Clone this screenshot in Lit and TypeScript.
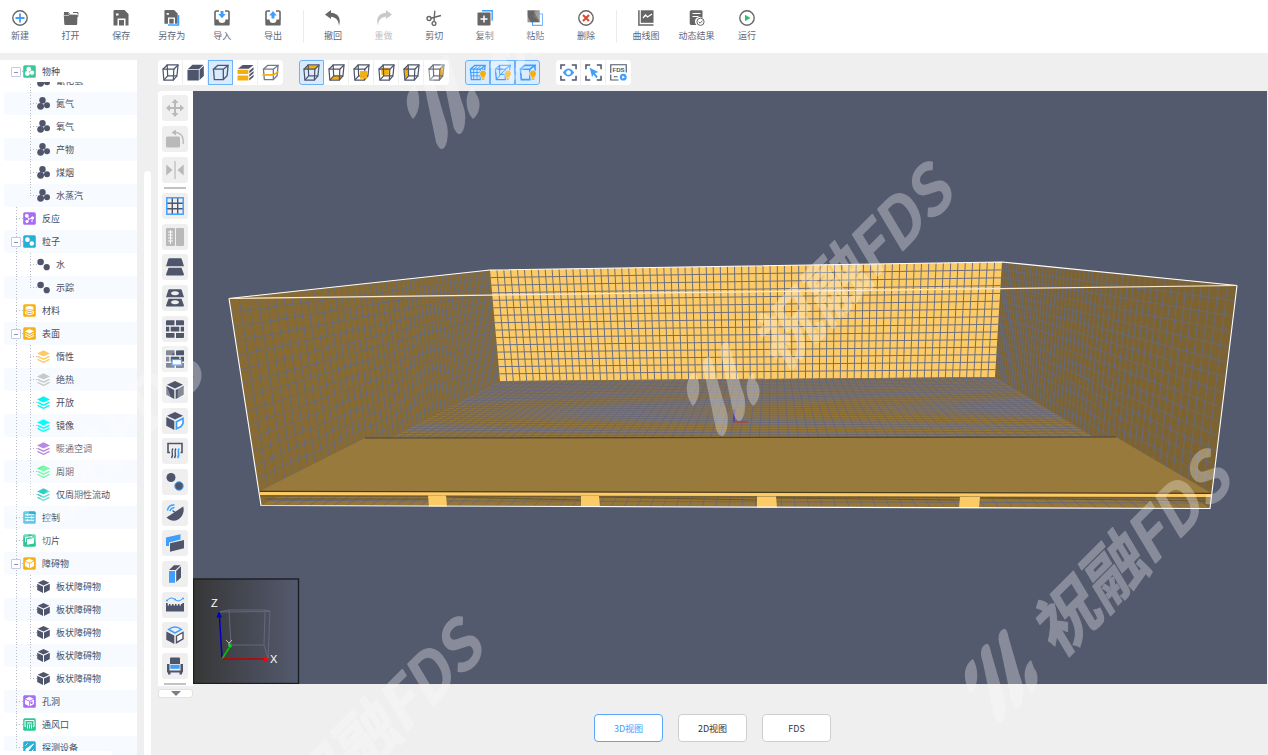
import { LitElement, html, svg, css, nothing } from "lit";
import { customElement, property, state } from "lit/decorators.js";
import { classMap } from "lit/directives/class-map.js";

const D = "#4f566b";
const B = "#409eff";
const Y = "#f5ae0c";
const G = "#666666";
const L = "#b9b9b9";

/* ---------- top bar icons (16 x 16) ---------- */
const floppy = svg`<path fill=${G} d="M1.500 0H11.500L15.500 4V15.500H12.500V8.500H4.500V15.500H.5V1A1 1 0 0 1 1.500 0ZM3 3.500V5.500H5.500V3.500Z" fill-rule="evenodd"/><rect x="6" y="10" width="5" height="5.500" fill=${G}/>`;
const topIcons: Record<string, unknown> = {
  new: svg`<circle cx="8" cy="8" r="7.200" fill="none" stroke=${G} stroke-width="1.400"/><path d="M8 3.500v9M3.500 8h9" stroke=${B} stroke-width="1.800"/>`,
  open: svg`<path fill=${G} d="M.8 5.500 1 3h4l1 1.500h8.500L14.200 14a1 1 0 0 1-1 1H2.300a1 1 0 0 1-1-1Z"/><path fill="none" stroke=${G} d="M1 2.500h4.500L6.500 4M10 2.500h5L14.700 7"/><path stroke="#fff" stroke-width=".6" d="M1 5.500h5l1-1h8"/>`,
  save: floppy,
  saveas: svg`<g transform="scale(.88)">${floppy}</g><path d="M4 15h10.500V5" fill="none" stroke=${B} stroke-width="1.500"/>`,
  import: svg`<path d="M5 1H2.200A1.200 1.200 0 0 0 1 2.200V10M11 1h2.800A1.200 1.200 0 0 1 15 2.200V10" fill="none" stroke=${G} stroke-width="1.600"/><path fill=${G} d="M.3 9.500H4.500a3.500 3.500 0 0 0 7 0h4.200V14.500a1 1 0 0 1-1 1H1.300a1 1 0 0 1-1-1Z"/><path fill=${B} d="M6.500 1h3v3h2.300L8 8.200 4.200 4h2.300Z"/>`,
  export: svg`<path d="M5 1H2.200A1.200 1.200 0 0 0 1 2.200V10M11 1h2.800A1.200 1.200 0 0 1 15 2.200V10" fill="none" stroke=${G} stroke-width="1.600"/><path fill=${G} d="M.3 9.500H4.500a3.500 3.500 0 0 0 7 0h4.200V14.500a1 1 0 0 1-1 1H1.300a1 1 0 0 1-1-1Z"/><path fill=${B} d="M6.500 8.500h3v-3h2.300L8 1 4.200 5.500h2.300Z"/>`,
  undo: svg`<path fill=${G} d="M0 4.500 6 0v2.800C12.500 3 16.500 8 14 15.500 13.500 10 10.500 7 6 6.800V9Z"/>`,
  redo: svg`<path fill="#c9c9c9" d="M16 4.500 10 0v2.800C3.500 3 -.5 8 2 15.500 2.500 10 5.500 7 10 6.800V9Z"/>`,
  cut: svg`<g fill="none" stroke=${G} stroke-width="1.400"><circle cx="3" cy="8.500" r="2"/><circle cx="8" cy="13.500" r="1.900"/><path d="M4.800 8.200 15 5.500M8 11.500 8.800.8"/></g>`,
  copy: svg`<path d="M5 .8h10.200V11" fill="none" stroke=${B} stroke-width="1.400"/><rect x=".5" y="2.500" width="13" height="13" rx=".8" fill=${G}/><path d="M7 5.500v7M3.500 9h7" stroke="#fff" stroke-width="1.500"/>`,
  paste: svg`<rect x="5.500" y="4" width="10" height="11.300" fill="none" stroke=${B}/><rect x=".5" y=".3" width="12" height="12" fill=${G}/><path d="M12.500.3 6 6l6.500 6.300Z" fill="#777"/>`,
  delete: svg`<circle cx="8" cy="8" r="7.200" fill="none" stroke=${G} stroke-width="1.400"/><path d="m5 5 6 6M11 5l-6 6" stroke="#d9482b" stroke-width="2"/>`,
  curve: svg`<rect x="2.800" y=".3" width="12.700" height="12.500" fill=${G}/><path d="M.9.300V15h14.600" fill="none" stroke=${G} stroke-width="1.500"/><path d="m5 8 2.500-3 2 2L14 4" fill="none" stroke="#fff" stroke-width="1.300"/>`,
  result: svg`<path fill=${G} d="M2.500.3h10a1 1 0 0 1 1 1V8A4.500 4.500 0 0 0 7.500 15H2a1.500 1.500 0 0 1-1.300-1.500V2A1.700 1.700 0 0 1 2.500.300Z"/><path d="M3.500 3.500h8M3.500 6.500h6" stroke="#fff"/><circle cx="11.500" cy="11.800" r="3.600" fill="#fff" stroke=${G}/><path d="m9.700 11.800 1.400 1.400 2.400-2.600" fill="none" stroke=${G}/>`,
  run: svg`<circle cx="8" cy="8" r="7.200" fill="none" stroke=${G} stroke-width="1.400"/><path d="M6 4.800 11.500 8 6 11.200Z" fill="#2cc36b"/>`,
};

/* ---------- horizontal view toolbar icons (18 x 18) ---------- */
const wire = (c: string) => svg`<g fill="none" stroke=${c} stroke-width="1.300"><path d="M1 5.500H12.500L12 17H2ZM5.500 1H17L15.800 12.500H6Z"/><path d="M1 5.500 5.500 1M12.500 5.500 17 1M12 17l3.800-4.500M2 17l4-4.500"/></g>`;
const box = (c: string) => svg`<g fill="none" stroke=${c} stroke-width="1.400"><path d="M1.500 5.500H12V16.500H2.500ZM1.500 5.500 6 1.500H17L12 5.500M17 1.500L16 12.500L12 16.500"/></g>`;
const bulb = svg`<path fill=${Y} stroke="#d9ebff" stroke-width="1.600" paint-order="stroke" d="M14.800 7a3.200 3.200 0 0 1 1.800 5.800V14.300H13V12.800A3.200 3.200 0 0 1 14.800 7ZM13.300 15h3v1.800H13.300Z"/>`;
const corners = svg`<path d="M1 5.500V1H5.500M12.500 1H17V5.500M17 12.500V17H12.500M5.500 17H1V12.500" fill="none" stroke=${D} stroke-width="1.600"/>`;
const viewIcons: Record<string, unknown> = {
  wire: wire(D),
  solid: svg`<path fill=${D} d="M.5 6.200H12.500V17.500H.500ZM1 5.200 5.800.8H17.500L12.800 5.200ZM13.300 6 17.800 1.800V12.800L13.300 17Z"/>`,
  box: box(D),
  layers: svg`<path fill=${D} d="M1 5 6 1H17.500L12.500 5ZM13 7.200 17.500 3.500V6L13 9.800ZM13 11.200l4.500-3.700v2.300L13 13.600ZM13 15l4.500-3.500v2.300L13 17.400Z"/><path fill=${Y} d="M.5 6H12v4.700H.5ZM.5 12.200H12V17.500H.5Z"/>`,
  mid: svg`${box("#757b8b")}<path d="M.5 11.500H12L17.500 8" fill="none" stroke=${Y} stroke-width="1.700"/>`,
  top: svg`<path fill=${Y} d="M2 5.500 6 1.500H16L12.500 5.500Z"/>${wire(D)}`,
  bottom: svg`<path fill=${Y} d="M3 16.500l3.500-4H16L12.500 16.500Z"/>${wire(D)}`,
  front: svg`${wire(D)}<rect x="7.500" y="7.500" width="7.500" height="8" fill=${Y}/>`,
  back: svg`<rect x="3.500" y="4" width="8" height="7.500" fill=${Y}/>${wire(D)}`,
  left: svg`<path fill=${Y} d="M1.500 6.500l4-3.500.5 9.500L2.500 16Z"/>${wire(D)}`,
  right: svg`<path fill=${Y} d="M12.800 6l3.700-3.500-.5 9.500-3.500 4Z"/>${wire("#6d7384")}`,
  grid: svg`${box(B)}<path d="M5 5.500V16.500M8.500 5.500V16.500M1.500 9H12L17 5M2 12.500H12M9.500 1.500 5 5.500M13 1.500 8.500 5.500M14.500 4V8" fill="none" stroke=${B}/>${bulb}`,
  diag: svg`${box(B)}<path d="M2.500 16.500 12 5.500M6 1.500V11M6 11H12" fill="none" stroke=${B}/>${bulb}`,
  plain: svg`<path d="M1.500 5.500H11.500V16.500H2.500ZM1.500 5.500 6 1.500H17L11.500 5.500M17 1.500V8" fill="none" stroke=${B} stroke-width="1.700"/>${bulb}`,
  eye: svg`${corners}<path fill=${B} fill-rule="evenodd" d="M3 9q6-8.500 12 0-6 8.500-12 0ZM9 6.500a2.500 2.500 0 1 0 .01 0Z"/>`,
  pick: svg`${corners}<path fill=${B} d="M5 4 14 8.500 10.500 9.800 13.500 13.500 12 15 9 11.200 7.500 14Z"/>`,
  fds: svg`<path d="M.8 9.500V.8H17.200V9M.8 11v6H9M4 13.500h4" fill="none" stroke=${D} stroke-width="1.200"/><text x="2.600" y="8.300" font-size="6.500" font-weight="700" font-family="Liberation Sans, sans-serif" fill=${D}>FDS</text><circle cx="14" cy="14" r="3.600" fill=${B}/><path fill="#fff" d="M13 12.300 15.800 14 13 15.700Z"/>`,
};

/* ---------- vertical tool icons (18 x 18) ---------- */
const bricks = svg`<path fill=${D} d="M0 1.200Q0 .3 1 .3H8.500V5.300H0ZM10 .3h7q1 0 1 1v4H10ZM0 6.700H3.300V11.500H0ZM4.700 6.700h8.600V11.500H4.700ZM14.700 6.700H18V11.500H14.700ZM0 12.900H8.500V17.800H1q-1 0-1-1ZM10 12.900h8v4q0 1-1 1H10Z"/>`;
const toolIcons: Record<string, unknown> = {
  move: svg`<path fill=${L} d="M9 0l3.500 4H10v4h4V5.500L18 9l-4 3.500V10H10v4h2.500L9 18l-3.500-4H8V10H4v2.500L0 9 4 5.500V8H8V4H5.500Z"/>`,
  rotate: svg`<rect x="0" y="6.500" width="14" height="11" rx="1.500" fill=${L}/><path d="M8 2.500h2A7.500 8 0 0 1 17.200 10V14" fill="none" stroke=${L} stroke-width="1.300"/><path fill=${L} d="M5.500 2.500 10 -.5V5.500Z"/>`,
  mirror: svg`<path fill=${L} d="M.3 3.500 6.500 9 .3 14.500ZM17.700 3.500 11.500 9l6.200 5.500Z"/><path d="M9 0V18" stroke=${L} stroke-width="1.200"/>`,
  grid: svg`<path d="M6.300 1V17M11.700 1V17M1 6.300H17M1 11.700H17" stroke=${D} stroke-width="1.400"/><rect x=".8" y=".8" width="16.400" height="16.400" fill="none" stroke=${B} stroke-width="1.500"/>`,
  ruler: svg`<rect x="0" y="0" width="9" height="18" rx="1" fill=${L}/><rect x="10" y="0" width="8" height="18" rx="1" fill=${L}/><path d="M4.500 2V16M2 4H7M2 7H7M2 10H7M2 13H7" stroke="#fff" stroke-width=".9"/>`,
  slab: svg`<path fill=${D} d="M3.300.3H14.700q.8 0 1 .8L18 8.300H0L2.300 1.100q.2-.8 1-.8ZM2.500 9.700h13L18 16.500q0 1-1 1H1q-1 0-1-1Z"/>`,
  hole: svg`<path fill=${D} fill-rule="evenodd" d="M3.300.3H14.700q.8 0 1 .8L18 8.300H0L2.300 1.100q.2-.8 1-.8ZM9 2.300a4 2 0 1 0 .01 0ZM2.500 9.700h13L18 16.500q0 1-1 1H1q-1 0-1-1ZM9 11.200a4 2 0 1 0 .01 0Z"/>`,
  wall: bricks,
  window: svg`${bricks}<rect x="6" y="9.500" width="9.500" height="5.500" fill="#fff" stroke=${B} stroke-width="1.200"/>`,
  block: svg`<path fill=${D} d="M9 0 17 3.800 9 7.600 1 3.800ZM.3 5 8.300 9v9L.3 13.800ZM17.700 5 9.700 9v9l8-4.200Z"/>`,
  blockhole: svg`<path fill=${D} d="M9 0 17 3.800 9 7.600 1 3.800ZM.3 5 8.300 9v9L.3 13.800Z"/><path fill="#fff" stroke=${B} stroke-width="1.700" d="M10.500 9.800 17 6.500v5L15 14.500 10.500 16.700Z"/>`,
  vent: svg`<path d="M4 10.500H2V1.500H16V10.500H14.500" fill="none" stroke=${D} stroke-width="1.600"/><path d="M7 6.500c-3 3.500 1.500 5-1.500 9.500M10 6.500c-3 3.500 1.500 5-1.500 9.500" fill="none" stroke=${D} stroke-width="1.400"/><path d="M13.200 6.500c-3 3.500 1.500 5-1.500 9.500" fill="none" stroke=${B} stroke-width="1.600"/>`,
  particle: svg`<circle cx="5" cy="4.500" r="4.500" fill=${D}/><circle cx="13" cy="13" r="4.200" fill=${D} stroke=${B}/>`,
  radar: svg`<path fill=${D} d="M17.200 2.500C20 11.500 10 22 .5 13.500Z"/><path d="m10 9-3.500-2.500" stroke=${D} stroke-width="1.500"/><path d="M1.500 6.500A6 6 0 0 1 8.500 1M4 7A4 4 0 0 1 8.500 3.800" fill="none" stroke=${B} stroke-width="1.500"/>`,
  slice: svg`<path fill=${B} d="M0 3.500 14.500.3V5.500L3 8.500V12H0Z"/><path fill=${D} d="M4 9.300 18 6v8.300L4 17.800Z"/>`,
  prism: svg`<rect x="3" y="6" width="6" height="11.800" fill=${B}/><path fill=${D} d="M3 5 8 .3h6.500L9.500 5ZM10.200 6 15 1.300V12.500L10.200 17Z"/>`,
  measure: svg`<path d="M1 4.500Q5 0 9 3.500T17 2" fill="none" stroke=${B}/><circle cx="1" cy="4.500" r="1" fill=${B}/><circle cx="9" cy="3.500" r="1" fill=${B}/><circle cx="17" cy="2.500" r="1" fill=${B}/><path fill=${D} d="M0 7H1.700V9.500H3V8H4.500V9.500H6V8H7.500V9.500H9V8H10.500V9.500H12V8H13.500V9.500H15V8H16.300V7H18V15.500H0Z"/>`,
  view3d: svg`<path fill="none" stroke=${B} stroke-width="1.500" d="M9 7 2.500 3.500Q9-1.500 15.500 3.500Z"/><path fill=${D} d="M.3 5.500 8.300 9.500V18L.3 13.800Z"/><path fill="#fff" stroke=${D} stroke-width="1.400" d="M10.500 10 17 6.500v6.300L10.500 16.700Z"/>`,
  seat: svg`<path fill=${D} d="M5 .5h8a1 1 0 0 1 1 1V7H4V1.500a1 1 0 0 1 1-1ZM1 7H3.500v6.500H14.500V7H17v8.500H16V17.500H13.500V15.500H4.500V17.500H2V15.500H1Z"/><rect x="4.300" y="7.800" width="9.400" height="4" fill=${B}/>`,
};

/* ---------- tree icons (13 x 13) ---------- */
const tile = (c: string, inner: unknown) => svg`<rect x=".2" y=".2" width="12.600" height="12.600" rx="1.500" fill=${c}/>${inner}`;
const dots3 = (c: string) => svg`<g fill=${c}><circle cx="5.500" cy="3.300" r="3.200"/><circle cx="3.600" cy="9.300" r="3.400"/><circle cx="10" cy="8.300" r="3"/></g>`;
const dots2 = (c: string) => svg`<circle cx="3.600" cy="4" r="3.300" fill=${c}/><circle cx="9.700" cy="9.200" r="3.100" fill=${c}/>`;
const stack = (c: string) => svg`<path fill=${c} d="M6.500.3 13 3.400 6.500 6.500 0 3.400Z"/><path d="M.5 6.300 6.500 9.200 12.500 6.300M.5 9.400l6 2.900 6-2.900" fill="none" stroke=${c} stroke-width="1.400"/>`;
const cube = (c: string) => svg`<path fill=${c} d="M6.500 0 12.300 2.800 6.500 5.600.7 2.800ZM.2 3.800 6 6.600V13L.2 9.900ZM12.800 3.800 7 6.600V13l5.800-3.100Z"/>`;
const small = (i: unknown) => svg`<g transform="translate(1.800 1.800) scale(.72)">${i}</g>`;
const treeIcons: Record<string, unknown> = {
  species: tile("#3cc99a", small(dots3("#fff"))),
  molecule: dots3(D),
  reaction: tile("#a66cf5", svg`<g fill="#fff" stroke="#fff"><path d="M4 4.500 6 7l4-1M6 7 4 9.500" fill="none"/><circle cx="3.800" cy="3.800" r="1.500"/><circle cx="9.500" cy="6" r="1.200"/><circle cx="4" cy="9.500" r="1.200"/><circle cx="9" cy="9" r=".4"/></g>`),
  particles: tile("#27b0d6", small(dots2("#fff"))),
  drop: dots2(D),
  material: tile("#f8b10e", svg`<ellipse cx="6.500" cy="3.800" rx="4" ry="1.700" fill="#fff"/><path d="M2.500 5.500q4 2.500 8 0M2.500 7.500q4 2.500 8 0V9.500q-4 2.500-8 0Z" fill="none" stroke="#fff"/>`),
  surface: tile("#f8b10e", small(stack("#fff"))),
  control: tile("#27b0d6", svg`<path d="M2 3.800H11M2 6.500H11M2 9.200H11M4.500 2.800v2M8.500 5.500v2M4.500 8.200v2" stroke="#fff" stroke-width="1.100"/>`),
  slice: tile("#2cc795", svg`<path d="M2.500 8V3.500L9 2.500V4" fill="none" stroke="#fff"/><path fill="#fff" d="M4 5.200 11 4V9.500L4 10.800Z"/>`),
  obstacle: tile("#f8b10e", small(cube("#fff"))),
  cube: cube(D),
  holes: tile("#a66cf5", svg`${small(cube("#fff"))}<circle cx="8.500" cy="7.800" r="1.300" fill="#a66cf5"/>`),
  vent: tile("#2cc795", svg`<path d="M3 8.500H2V2.500H11V8.500H10M4 5H9" fill="none" stroke="#fff"/><path d="M4.500 6.500v4M6.500 6.500v4M8.500 6.500v4" stroke="#fff"/>`),
  probe: tile("#27b0d6", svg`<path fill="#fff" d="M10.500 2.500 11 3 5 10.500H2.500V8Z"/><path d="M2.500 4.500 4.500 2.500M8.500 10.500l2-2" stroke="#fff"/>`),
};
["#fdcb66", "#c9c9c9", "#00f5f5", "#00ffff", "#b98ae0", "#3dfa8a", "#2fcfc8"].forEach((c, i) => (treeIcons["s" + i] = stack(c)));

interface Node { label: string; icon: string; child?: boolean; last?: boolean; open?: boolean; noRoot?: boolean; end?: boolean }
const rows: Node[] = [
  { label: "氰化氢", icon: "molecule", child: true, noRoot: true },
  { label: "氮气", icon: "molecule", child: true, noRoot: true },
  { label: "氧气", icon: "molecule", child: true, noRoot: true },
  { label: "产物", icon: "molecule", child: true, noRoot: true },
  { label: "煤烟", icon: "molecule", child: true, noRoot: true },
  { label: "水蒸汽", icon: "molecule", child: true, noRoot: true, last: true },
  { label: "反应", icon: "reaction" },
  { label: "粒子", icon: "particles", open: true },
  { label: "水", icon: "drop", child: true },
  { label: "示踪", icon: "drop", child: true, last: true },
  { label: "材料", icon: "material" },
  { label: "表面", icon: "surface", open: true },
  { label: "惰性", icon: "s0", child: true },
  { label: "绝热", icon: "s1", child: true },
  { label: "开放", icon: "s2", child: true },
  { label: "镜像", icon: "s3", child: true },
  { label: "暖通空调", icon: "s4", child: true },
  { label: "周期", icon: "s5", child: true },
  { label: "仅周期性流动", icon: "s6", child: true, last: true },
  { label: "控制", icon: "control" },
  { label: "切片", icon: "slice" },
  { label: "障碍物", icon: "obstacle", open: true },
  { label: "板状障碍物", icon: "cube", child: true },
  { label: "板状障碍物", icon: "cube", child: true },
  { label: "板状障碍物", icon: "cube", child: true },
  { label: "板状障碍物", icon: "cube", child: true },
  { label: "板状障碍物", icon: "cube", child: true, last: true },
  { label: "孔洞", icon: "holes" },
  { label: "通风口", icon: "vent" },
  { label: "探测设备", icon: "probe", end: true },
];

/* ---------- perspective helper: unit square to quad ---------- */
type P = [number, number];
function quadMap(q: [P, P, P, P]) {
  const [[x0, y0], [x1, y1], [x2, y2], [x3, y3]] = q;
  const dx1 = x1 - x2, dx2 = x3 - x2, dx3 = x0 - x1 + x2 - x3;
  const dy1 = y1 - y2, dy2 = y3 - y2, dy3 = y0 - y1 + y2 - y3;
  const den = dx1 * dy2 - dx2 * dy1;
  const g = (dx3 * dy2 - dx2 * dy3) / den;
  const h = (dx1 * dy3 - dx3 * dy1) / den;
  const a = x1 - x0 + g * x1, b = x3 - x0 + h * x3;
  const d = y1 - y0 + g * y1, e = y3 - y0 + h * y3;
  return (u: number, v: number) => {
    const w = g * u + h * v + 1;
    return `${((a * u + b * v + x0) / w).toFixed(1)} ${((d * u + e * v + y0) / w).toFixed(1)}`;
  };
}
function mesh(q: [P, P, P, P], cols: number, lines: number) {
  const m = quadMap(q);
  let s = "";
  for (let i = 1; i < cols; i++) s += `M${m(i / cols, 0)}L${m(i / cols, 1)}`;
  for (let j = 1; j < lines; j++) s += `M${m(0, j / lines)}L${m(1, j / lines)}`;
  return s;
}
const outline = (q: P[]) => q.map((p) => p.join(",")).join(" ");
const leftWall: [P, P, P, P] = [[229, 298], [490, 270], [500, 381], [261, 505]];
const rightWall: [P, P, P, P] = [[1002, 262], [1237, 285], [1210, 508], [995, 377]];
const backWall: [P, P, P, P] = [[490, 270], [1002, 262], [995, 377], [500, 381]];
const floor: [P, P, P, P] = [[500, 381], [995, 377], [1210, 508], [261, 505]];

@customElement("fds-scene")
class FdsScene extends LitElement {
  static styles = css`
    :host { display: block; min-width: 0; min-height: 0; background: #545a6e; overflow: hidden; }
    .view { display: block; width: 100%; height: 100%; }
    .axis { font: 11px "Liberation Sans", sans-serif; fill: #fff; }
  `;
  render() {
    return html`<svg class="view" viewBox="193 91 1074 593" preserveAspectRatio="xMidYMid slice" role="img" aria-label="3D">
      <defs><linearGradient id="fade"><stop offset="0" stop-color="#373737"/><stop offset="1" stop-color="#545a6e"/></linearGradient></defs>
      <polygon points=${outline(leftWall)} fill="#886b33"/>
      <path d=${mesh(leftWall, 50, 15)} fill="none" stroke="#666a7b" stroke-width="1"/>
      <polygon points=${outline(rightWall)} fill="#7d6331"/>
      <path d=${mesh(rightWall, 50, 15)} fill="none" stroke="#666a7b" stroke-width="1"/>
      <polygon points=${outline(backWall)} fill="#fdcb66"/>
      <path d=${mesh(backWall, 72, 15)} fill="none" stroke="#6f6f7c" stroke-width="1"/>
      <polygon points=${outline(floor)} fill="#967636"/>
      <path d=${mesh(floor, 72, 50)} fill="none" stroke="#5f6688" stroke-width=".8"/>
      <polygon points="365,438 1116,437 1211,493 260,491" fill="#987a3d"/>
      <path d="M365 438 1116 437" stroke="#4e4632" stroke-width="1.200"/>
      <path d="M265 499 430 499M446 497 581 500M599 497 757 500M776 498 960 500M979 498 1208 501" stroke="#6b5528" stroke-width="1"/>
      <path d="M260 491.500 1211 493.500" stroke="#4a3a1a" stroke-width="1.500"/>
      <polygon points="260,492 1211,494 1211,497 260,495" fill="#fdcb66"/>
      <path d="M260 496 1211 498" stroke="#715928"/>
      <path fill="#fdcb66" d="M428 495.500H446L447 506.500H429ZM581 496H599L600 507H581ZM757 496.500H776L777 507.500H757ZM960 497H980L979 508H959Z"/>
      <g fill="none" stroke="#fff">
        <path stroke-width="1.100" d="M229 298.500 490 270 1002 262 1237 285.500"/>
        <path stroke="#ffe9c4" stroke-width="1.200" d="M229 298.500 1237 285.500"/>
        <path stroke-width="1.100" d="M229 298.500 261 505.500 1210 508.500 1237 285.500"/>
      </g>
      <path d="M734 422V409" stroke="#3a36c8" stroke-width="1.200"/>
      <path d="M734 422H748" stroke="#c0392b" stroke-width="1.200"/>
      <rect x="193.500" y="579" width="105" height="104.500" fill="url(#fade)" stroke="#1d1e22" stroke-width="1.400"/>
      <g fill="none" stroke="#62677d"><path d="M219 612 229 610H265L270 611 268 659M229 610 231 645H264L268 658M265 610 264 645M219 612 270 611.500"/></g>
      <path d="M222 658 219.500 617" stroke="#0000b8" stroke-width="1.500"/><path fill="#0000b8" d="M219 611 222 617.500H216.500Z"/>
      <path d="M222 659 229 648" stroke="#00c800" stroke-width="1.500"/><circle cx="230" cy="646" r="1.800" fill="#00e000"/>
      <path d="M222 659H264" stroke="#c00000" stroke-width="1.500"/><path fill="#f00" d="M270 659.300 263.500 656.500V662Z"/>
      <text class="axis" x="211" y="607">Z</text><text class="axis" x="270" y="663">X</text>
      <path d="M226 640 229 643 232 640M229 643V645" stroke="#bbb" fill="none"/>
    </svg>`;
  }
}

@customElement("fds-tree")
class FdsTree extends LitElement {
  static styles = css`
    :host { display: flex; flex-direction: column; min-height: 0; background: #fff; color: #464d63; font-size: 9px; overflow: hidden; }
    .head { height: 22px; flex: none; }
    .list { flex: 1; min-height: 0; overflow: hidden; }
    .list > .row:first-child { margin-top: -13px; }
    .row { position: relative; height: 23px; margin-left: 4px; display: flex; align-items: center; border-radius: 3px 0 0 3px; white-space: nowrap; }
    .head .row { height: 22px; }
    .stripe { background: #f7fafe; }
    .guide { flex: none; width: 19px; height: 23px; }
    .guide.child { width: 33px; }
    .icon { flex: none; width: 13px; height: 13px; margin-right: 6px; }
    .toggle { position: absolute; left: 7px; top: 7px; width: 10px; height: 10px; padding: 0; border: 1px solid #c5c9e4; border-radius: 1px; background: #fff; display: grid; place-items: center; }
    .toggle::before { content: ""; width: 4px; height: 1px; background: #8f94ad; }
  `;
  private row(n: Node, i: number, head = false) {
    return html`<div class=${classMap({ row: true, stripe: !head && i % 2 === 1 })} role="treeitem">
      <svg class=${classMap({ guide: true, child: !!n.child })} viewBox=${n.child ? "0 0 33 23" : "0 0 19 23"}>
        <g stroke="#b9bcc7" stroke-dasharray="1 2">
          ${n.noRoot || head ? nothing : svg`<path d=${n.end ? "M12.500 0V12" : "M12.500 0V23"}/>`}
          ${n.child ? svg`<path d=${n.last ? "M26.500 0V12" : "M26.500 0V23"}/><path d="M26 11.500H33"/>` : svg`<path d="M12 11.500H19"/>`}
        </g>
      </svg>
      ${n.open ? html`<button class="toggle" aria-label=${"收起 " + n.label}></button>` : nothing}
      <svg class="icon" viewBox="0 0 13 13">${treeIcons[n.icon]}</svg>
      <span>${n.label}</span>
    </div>`;
  }
  render() {
    return html`<div class="head">${this.row({ label: "物种", icon: "species", open: true }, 0, true)}</div>
      <div class="list" role="tree">${rows.map((n, i) => this.row(n, i))}</div>`;
  }
}

const blade = "M708 357C702 360 702 367 705 376L716 429C719 437 724 440 727 428 729 417 727 411 724 403L713 365C712 359 710 356 708 357Z";
@customElement("fds-watermark")
class FdsWatermark extends LitElement {
  static styles = css`
    :host { display: block; overflow: hidden; pointer-events: none; }
    .layer { display: block; width: 100%; height: 100%; opacity: 0.3; }
    .brand { font-family: "Noto Sans CJK SC", sans-serif; font-style: italic; font-weight: 700; fill: #fff; stroke: #fff; stroke-width: 1px; stroke-linejoin: round; }
    .cn { font-size: 66px; }
    .en { font-size: 63px; font-weight: 500; stroke-width: 2px; }
  `;
  render() {
    const spots = [[0, 0], [278, 287], [-280, -287], [-470, 455], [-750, 180]];
    return html`<svg class="layer" aria-hidden="true">${spots.map(([x, y]) => svg`<g transform="translate(${x} ${y})" fill="#fff">
      <path d="M695 372C685 378 684 394 693 406 701 398 701 382 695 372ZM753 373C745 379 744 396 753 406 760 401 762 388 756 381Z"/>
      <path d=${blade}/><path d=${blade} transform="translate(17.500 -15)"/>
      <text class="brand" transform="translate(780 373) rotate(-45)"><tspan class="cn">祝融</tspan><tspan class="en">FDS</tspan></text>
    </g>`)}</svg>`;
  }
}

const topGroups = [
  [["new", "新建"], ["open", "打开"], ["save", "保存"], ["saveas", "另存为"], ["import", "导入"], ["export", "导出"]],
  [["undo", "撤回"], ["redo", "重做"], ["cut", "剪切"], ["copy", "复制"], ["paste", "粘贴"], ["delete", "删除"]],
  [["curve", "曲线图"], ["result", "动态结果"], ["run", "运行"]],
];
const viewGroups = [
  ["wire", "solid", "box", "layers", "mid"],
  ["top", "bottom", "front", "back", "left", "right"],
  ["grid", "diag", "plain"],
  ["eye", "pick", "fds"],
];
const tools1 = ["move", "rotate", "mirror"];
const tools2 = ["grid", "ruler", "slab", "hole", "wall", "window", "block", "blockhole", "vent", "particle", "radar", "slice", "prism", "measure", "view3d", "seat"];

@customElement("app-root")
class AppRoot extends LitElement {
  @property({ type: String }) mode = "3D视图";
  @state() private active = new Set(["box", "top", "grid", "diag", "plain"]);

  static styles = css`
    :host { position: relative; display: flex; flex-direction: column; height: 100vh; overflow: hidden; background: #efefef; font-family: "Noto Sans CJK SC", sans-serif; }
    * { box-sizing: border-box; }
    button { font: inherit; cursor: pointer; }
    .top { flex: none; height: 53px; padding: 10px 1px 0; background: #fff; display: flex; }
    .group { width: 291px; display: flex; justify-content: space-between; }
    .group.short { width: 139px; }
    .sep { width: 1px; height: 33px; margin: 0 10px 0 11px; background: #ececec; }
    .cmd { width: 38px; height: 36px; padding: 0; border: 0; background: none; color: #60667a; font-size: 9px; line-height: 14px; display: flex; flex-direction: column; align-items: center; gap: 3px; white-space: nowrap; }
    .cmd:disabled { color: #c0c2c8; }
    .cmd svg { width: 16px; height: 16px; flex: none; }
    .body { flex: 1; min-height: 0; display: grid; grid-template-columns: 137px 7px 1fr; column-gap: 7px; padding-right: 1px; }
    fds-tree { margin-top: 7px; }
    .thumb { margin-top: 118px; background: #fff; border-radius: 4px 4px 0 0; }
    .main { min-width: 0; min-height: 0; display: grid; grid-template-columns: 35px 1fr; grid-template-rows: 38px 1fr 71px; }
    .views { grid-column: 1 / -1; display: flex; gap: 16px; padding-top: 7px; }
    .set { display: flex; height: 25px; background: #fff; border-radius: 4px; }
    .view { width: 25px; height: 25px; padding: 0; border: 1px solid transparent; border-right-color: #efefef; background: none; display: grid; place-items: center; }
    .view:first-child { border-radius: 3px 0 0 3px; }
    .view:last-child { border-right-color: transparent; border-radius: 0 3px 3px 0; }
    .view.on { background: #d9ebff; border-color: #6bb2fb; }
    .view svg { width: 17px; height: 17px; display: block; }
    .tool svg { width: 18px; height: 18px; display: block; }
    .rail { min-height: 0; margin-bottom: -2px; padding: 4px 4px 0; background: #fff; border-radius: 3px 0 0 0; display: flex; flex-direction: column; }
    .stack { display: flex; flex-direction: column; justify-content: space-between; }
    .stack.small { height: 88px; flex: none; }
    .stack.fill { flex: 1; min-height: 0; }
    .line { flex: none; width: 22px; height: 2px; margin: 4px 2px; background: #c2c2c2; }
    .line.end { margin-bottom: 1px; }
    .tool { width: 26px; height: 26px; padding: 0; border: 0; border-radius: 3px; background: #efefef; display: grid; place-items: center; }
    .more { grid-column: 1; grid-row: 3; margin-top: 5px; height: 9px; padding: 0; border: 1px solid #e2e2e2; border-radius: 3px; background: #fff; display: grid; place-items: center; }
    .more svg { display: block; width: 10px; height: 5px; }
    .tabs { grid-column: 1 / -1; grid-row: 3; padding-top: 30px; display: flex; justify-content: center; gap: 15px; pointer-events: none; }
    .tab { width: 69px; height: 28px; padding: 0; border: 1px solid #cfcfcf; border-radius: 4px; background: #fff; color: #333; font-size: 9px; pointer-events: auto; }
    .tab.on { border-color: #5aa6f8; color: #409eff; }
    .hbar { position: absolute; left: 0; bottom: 0; width: 112px; height: 4px; background: #fff; border-radius: 0 3px 0 0; }
    fds-watermark { position: absolute; inset: 0; }
  `;

  private toggle(id: string) {
    const next = new Set(this.active);
    next.has(id) ? next.delete(id) : next.add(id);
    this.active = next;
  }
  private tool = (id: string) => html`<button class="tool" aria-label=${id}><svg viewBox="0 0 18 18">${toolIcons[id]}</svg></button>`;

  render() {
    return html`
      <header class="top">
        ${topGroups.map((g, i) => html`${i ? html`<span class="sep"></span>` : nothing}
          <div class=${classMap({ group: true, short: g.length === 3 })}>
            ${g.map(([id, label]) => html`<button class="cmd" ?disabled=${id === "redo"}><svg viewBox="0 0 16 16">${topIcons[id]}</svg><span>${label}</span></button>`)}
          </div>`)}
      </header>
      <div class="body">
        <fds-tree></fds-tree>
        <div class="thumb"></div>
        <main class="main">
          <div class="views">
            ${viewGroups.map((g) => html`<div class="set">${g.map((id) => html`<button class=${classMap({ view: true, on: this.active.has(id) })} aria-label=${id} @click=${() => this.toggle(id)}><svg viewBox="0 0 18 18">${viewIcons[id]}</svg></button>`)}</div>`)}
          </div>
          <nav class="rail">
            <div class="stack small">${tools1.map(this.tool)}</div>
            <div class="line"></div>
            <div class="stack fill">${tools2.map(this.tool)}</div>
            <div class="line end"></div>
          </nav>
          <fds-scene></fds-scene>
          <button class="more" aria-label="更多"><svg viewBox="0 0 10 5"><path d="M0 0H10L5 5Z" fill="#7b7f8c"/></svg></button>
          <div class="tabs">
            ${["3D视图", "2D视图", "FDS"].map((t) => html`<button class=${classMap({ tab: true, on: t === this.mode })} @click=${() => (this.mode = t)}>${t}</button>`)}
          </div>
        </main>
      </div>
      <div class="hbar"></div>
      <fds-watermark></fds-watermark>
    `;
  }
}
